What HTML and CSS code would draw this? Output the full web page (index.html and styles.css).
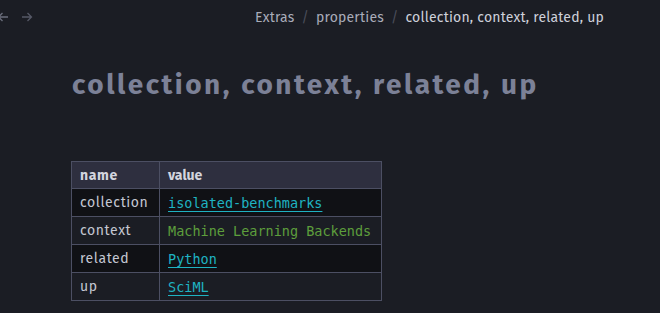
FILE: index.html
```html
<!DOCTYPE html>
<html>
<head>
<meta charset="utf-8">
<link rel="stylesheet" href="styles.css">
</head>
<body>
<header class="topbar">
  <div class="nav">
    <svg class="arrow back" width="12" height="12" viewBox="0 0 12 12"><path d="M11 6H1.5M5.5 2L1.5 6l4 4" fill="none" stroke="currentColor" stroke-width="1.3"/></svg>
    <svg class="arrow fwd" width="12" height="12" viewBox="0 0 12 12"><path d="M1 6h9.5M6.5 2l4 4-4 4" fill="none" stroke="currentColor" stroke-width="1.3"/></svg>
  </div>
  <nav class="crumbs">
    <span class="crumb">Extras</span>
    <span class="sep">/</span>
    <span class="crumb">properties</span>
    <span class="sep">/</span>
    <span class="crumb current">collection, context, related, up</span>
  </nav>
</header>
<main class="content">
  <h1 class="title">collection, context, related, up</h1>
  <table class="props">
    <thead>
      <tr><th class="c-name">name</th><th class="c-val">value</th></tr>
    </thead>
    <tbody>
      <tr class="odd"><td class="c-name">collection</td><td class="c-val"><a class="link">isolated-benchmarks</a></td></tr>
      <tr><td class="c-name">context</td><td class="c-val"><span class="plain">Machine Learning Backends</span></td></tr>
      <tr class="odd"><td class="c-name">related</td><td class="c-val"><a class="link">Python</a></td></tr>
      <tr><td class="c-name">up</td><td class="c-val"><a class="link">SciML</a></td></tr>
    </tbody>
  </table>
</main>
</body>
</html>
```
FILE: styles.css
```css
html, body {
  margin: 0;
  padding: 0;
  background: #1b1d24;
  width: 660px;
  height: 313px;
  overflow: hidden;
  font-family: "Fira Sans", "Noto Sans", "Open Sans", sans-serif;
}
.topbar {
  display: flex;
  align-items: center;
  height: 34px;
  position: relative;
}
.nav {
  display: flex;
  align-items: center;
  gap: 12px;
  margin-left: -3px;
  color: #555866;
}
.arrow { display: block; }
.back { color: #6b6e7c; }
.crumbs {
  margin-left: 222px;
  display: flex;
  align-items: center;
  gap: 7px;
  font-size: 14px;
  color: #a9acb9;
  letter-spacing: 0.2px;
}
.sep { color: #4a4d5a; }
.current { color: #cfd1db; }
.content {
  padding: 34px 0 0 72px;
}
.title {
  margin: 0;
  font-size: 28px;
  font-weight: 700;
  color: #7c8197;
  letter-spacing: 2.5px;
  line-height: 34px;
}
.props {
  margin-top: 59px;
  margin-left: -1px;
  border-collapse: collapse;
  font-size: 14px;
  border: 1px solid #4c4f63;
}
.props th, .props td {
  border: 1px solid #4c4f63;
  text-align: left;
  height: 27px;
  padding: 0 8px;
}
.props th {
  background: #2e2f3f;
  color: #d3d5de;
  font-weight: 700;
  height: 26px;
}
.props td { color: #c4c7d2; }
.c-name { width: 71px; letter-spacing: 0.6px; }
.c-val {
  width: 205px;
  font-family: "DejaVu Sans Mono", monospace;
  font-size: 13.5px;
}
th.c-val { font-family: "Fira Sans", "Noto Sans", sans-serif; font-size: 14px; }
tr.odd td { background: #101115; }
.link {
  color: #1fb3c2;
  text-decoration: underline;
  text-underline-offset: 3px;
}
.plain { color: #5d9e3c; }
```
